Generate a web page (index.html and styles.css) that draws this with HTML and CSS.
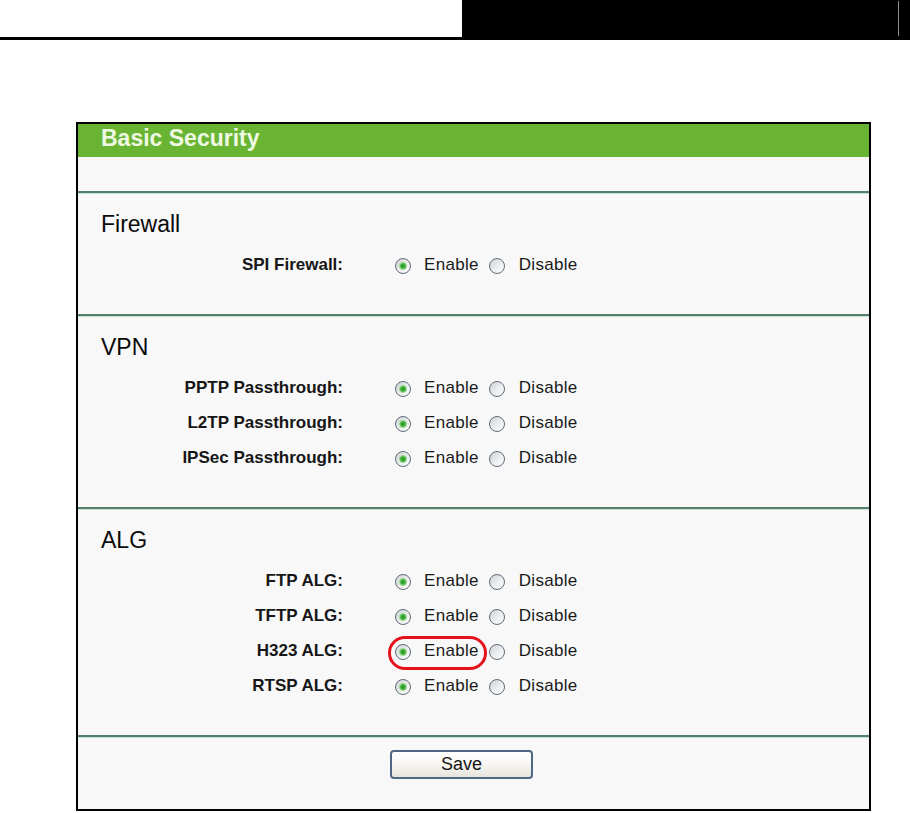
FILE: index.html
```html
<!DOCTYPE html>
<html lang="en">
<head>
<meta charset="utf-8">
<title>Basic Security</title>
<link rel="stylesheet" href="styles.css">
</head>
<body>
<div class="topbar">
  <div class="topbar-fill"></div>
  <div class="topbar-black"><span class="topbar-rule"></span></div>
</div>

<div class="panel">
  <div class="panel-title">Basic Security</div>
  <div class="panel-blank"></div>

  <section class="group">
    <h2 class="group-title">Firewall</h2>
    <div class="row">
      <span class="label">SPI Firewall:</span>
      <div class="opts">
        <label class="opt"><input type="radio" name="spi" checked><span>Enable</span></label>
        <label class="opt opt-off"><input type="radio" name="spi"><span>Disable</span></label>
      </div>
    </div>
  </section>

  <section class="group">
    <h2 class="group-title">VPN</h2>
    <div class="row">
      <span class="label">PPTP Passthrough:</span>
      <div class="opts">
        <label class="opt"><input type="radio" name="pptp" checked><span>Enable</span></label>
        <label class="opt opt-off"><input type="radio" name="pptp"><span>Disable</span></label>
      </div>
    </div>
    <div class="row">
      <span class="label">L2TP Passthrough:</span>
      <div class="opts">
        <label class="opt"><input type="radio" name="l2tp" checked><span>Enable</span></label>
        <label class="opt opt-off"><input type="radio" name="l2tp"><span>Disable</span></label>
      </div>
    </div>
    <div class="row">
      <span class="label">IPSec Passthrough:</span>
      <div class="opts">
        <label class="opt"><input type="radio" name="ipsec" checked><span>Enable</span></label>
        <label class="opt opt-off"><input type="radio" name="ipsec"><span>Disable</span></label>
      </div>
    </div>
  </section>

  <section class="group">
    <h2 class="group-title">ALG</h2>
    <div class="row">
      <span class="label">FTP ALG:</span>
      <div class="opts">
        <label class="opt"><input type="radio" name="ftp" checked><span>Enable</span></label>
        <label class="opt opt-off"><input type="radio" name="ftp"><span>Disable</span></label>
      </div>
    </div>
    <div class="row">
      <span class="label">TFTP ALG:</span>
      <div class="opts">
        <label class="opt"><input type="radio" name="tftp" checked><span>Enable</span></label>
        <label class="opt opt-off"><input type="radio" name="tftp"><span>Disable</span></label>
      </div>
    </div>
    <div class="row">
      <span class="label">H323 ALG:</span>
      <div class="opts">
        <label class="opt marked"><input type="radio" name="h323" checked><span>Enable</span></label>
        <label class="opt opt-off"><input type="radio" name="h323"><span>Disable</span></label>
      </div>
    </div>
    <div class="row">
      <span class="label">RTSP ALG:</span>
      <div class="opts">
        <label class="opt"><input type="radio" name="rtsp" checked><span>Enable</span></label>
        <label class="opt opt-off"><input type="radio" name="rtsp"><span>Disable</span></label>
      </div>
    </div>
  </section>

  <div class="footer">
    <button class="btn" type="button">Save</button>
  </div>
</div>
</body>
</html>
```

FILE: styles.css
```css
html, body {
  margin: 0;
  padding: 0;
  background: #ffffff;
}

body {
  font-family: "Liberation Sans", Arial, sans-serif;
  color: #111111;
}

/* top document header bar */
.topbar {
  display: flex;
  height: 37px;
  border-bottom: 3px solid #000000;
}

.topbar-fill {
  flex: 1;
}

.topbar-black {
  width: 448px;
  background: #000000;
  display: flex;
  justify-content: flex-end;
  padding: 1px 11px 1px 0;
  box-sizing: border-box;
}

.topbar-rule {
  width: 1px;
  background: #8a8a8a;
}

/* panel */
.panel {
  margin: 82px 0 0 76px;
  width: 795px;
  box-sizing: border-box;
  border: 2px solid #000000;
  background: #f8f8f8;
}

.panel-title {
  height: 33px;
  box-sizing: border-box;
  background: #69b533;
  color: #eef8e2;
  font-weight: bold;
  font-size: 23px;
  line-height: 26px;
  padding: 1px 0 6px 23px;
}

.panel-blank {
  height: 34px;
}

.group {
  border-top: 2px solid #557f6a;
  box-shadow: inset 0 1px 0 #c4e2d4;
  padding: 16px 0 32px 0;
}

.group-title {
  margin: 0 0 8px 0;
  padding-left: 23px;
  font-size: 23px;
  line-height: 30px;
  font-weight: normal;
  color: #0a0a0a;
}

.row {
  display: flex;
  align-items: center;
  height: 35px;
}

.label {
  width: 265px;
  text-align: right;
  font-weight: bold;
  font-size: 17px;
  color: #161616;
}

.opts {
  display: flex;
  align-items: center;
  margin-left: 52px;
  font-size: 17px;
  letter-spacing: 0.3px;
  color: #1a1a1a;
}

.opt {
  display: flex;
  align-items: center;
  gap: 13px;
}

.opt-off {
  margin-left: 10px;
  gap: 14px;
}

.opt input {
  appearance: none;
  -webkit-appearance: none;
  width: 16px;
  height: 16px;
  margin: 3px 0 0 0;
  border-radius: 50%;
  border: 1.5px solid #5f6b78;
  box-sizing: border-box;
  background: linear-gradient(135deg, #cfd2d6 0%, #eceeef 55%, #ffffff 100%);
}

.opt input:checked {
  background:
    radial-gradient(circle, #2a922a 0, #3aab36 2px, #98d98e 3.5px, rgba(255,255,255,0) 4.5px),
    linear-gradient(135deg, #cfd2d6 0%, #eceeef 55%, #ffffff 100%);
}

.marked {
  position: relative;
}

.marked::after {
  content: "";
  position: absolute;
  left: -7px;
  right: -8px;
  top: 50%;
  height: 34px;
  margin-top: -15px;
  box-sizing: border-box;
  border: 3px solid #e3121b;
  border-radius: 17px;
  pointer-events: none;
}

.footer {
  border-top: 2px solid #557f6a;
  box-shadow: inset 0 1px 0 #c4e2d4;
  padding: 13px 0 30px 312px;
}

.btn {
  display: block;
  width: 143px;
  height: 29px;
  box-sizing: border-box;
  border: 2px solid #4f6785;
  border-radius: 4px;
  background: linear-gradient(#ffffff 0%, #f7f6f2 50%, #e6e4dc 100%);
  font-family: "Liberation Sans", Arial, sans-serif;
  font-size: 18px;
  color: #151515;
  padding: 0;
  line-height: 25px;
}
```
